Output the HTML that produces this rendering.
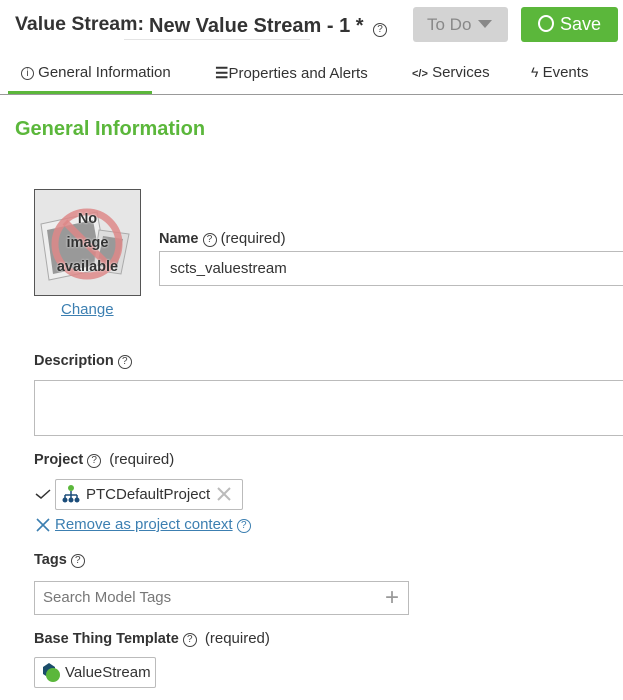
<!DOCTYPE html>
<html><head><meta charset="utf-8"><style>
*{margin:0;padding:0;box-sizing:border-box}
body{width:623px;height:700px;overflow:hidden;background:#fff;font-family:"Liberation Sans",Arial,sans-serif;color:#333;position:relative}
.a{position:absolute;white-space:nowrap}
.q{display:inline-block;width:14px;height:14px;border:1.3px solid #444;border-radius:50%;font-size:10px;line-height:12px;text-align:center;font-weight:normal;vertical-align:1px;color:#444}
.lbl{font-size:14.5px;font-weight:bold;color:#333}
.lbl span.r{font-weight:normal;font-size:15px}
.box{position:absolute;border:1px solid #bbb;background:#fff}
</style></head><body>
<div class="a" style="left:15px;top:13px;font-size:19.5px;font-weight:bold;color:#333">Value Stream:</div>
<div class="a" style="left:149px;top:15px;font-size:20px;font-weight:bold;color:#333">New Value Stream - 1 *</div>
<div class="a" style="left:124px;top:39px;width:186px;height:1px;background:#e4e4e4"></div>
<div class="a" style="left:373px;top:20px"><span class="q">?</span></div>
<div class="a" style="left:413px;top:7px;width:95px;height:35px;background:#d3d3d3;border-radius:3px;color:#888;font-size:17px;line-height:35px;padding-left:14px">To Do <span style="display:inline-block;width:0;height:0;border-left:7px solid transparent;border-right:7px solid transparent;border-top:8px solid #888;vertical-align:2px;margin-left:2px"></span></div>
<div class="a" style="left:521px;top:7px;width:97px;height:35px;background:#5bb73b;border-radius:3px;color:#fff;font-size:18px;line-height:35px;padding-left:17px"><span style="display:inline-block;width:16px;height:17px;border:2.5px solid #fff;border-radius:50%;vertical-align:-2px;margin-right:6px"></span>Save</div>
<div class="a" style="left:21px;top:64px;font-size:15px"><span class="q" style="width:13px;height:13px;line-height:11px">i</span> General Information</div>
<div class="a" style="left:215px;top:64px;font-size:15px"><span style="font-weight:bold">☰</span>Properties and Alerts</div>
<div class="a" style="left:412px;top:64px;font-size:15px"><span style="font-size:11px;font-weight:bold">&lt;/&gt;</span> Services</div>
<div class="a" style="left:531px;top:64px;font-size:15px"><span style="font-size:14px">ϟ</span> Events</div>
<div class="a" style="left:0;top:94px;width:623px;height:1px;background:#999"></div>
<div class="a" style="left:8px;top:91px;width:144px;height:3px;background:#5bb73b"></div>
<div class="a" style="left:15px;top:118px;font-size:20px;font-weight:bold;color:#5bb73b">General Information</div>
<div class="a" style="left:34px;top:189px;width:107px;height:107px;border:1px solid #555;background:#e6e6e6;overflow:hidden">
<svg width="105" height="105" style="position:absolute;left:0;top:0">
<polygon points="6,34 62,22 72,78 14,90" fill="#eee" stroke="#aaa"/><polygon points="12,40 58,30 66,74 18,84" fill="#999"/>
<polygon points="64,40 94,44 86,84 58,80" fill="#ddd" stroke="#aaa"/><polygon points="68,46 88,49 82,78 62,76" fill="#999"/>
<circle cx="52" cy="54" r="32" fill="none" stroke="#d88" stroke-width="7" opacity=".85"/><line x1="30" y1="32" x2="74" y2="76" stroke="#d88" stroke-width="7" opacity=".85"/>
</svg>
<div style="position:absolute;left:0;right:0;top:17px;text-align:center;font-size:14.5px;font-weight:bold;color:#333;line-height:24px;text-shadow:0 0 2px #fff">No<br>image<br>available</div>
</div>
<div class="a" style="left:61px;top:301px;font-size:15px;color:#3c7fb1;text-decoration:underline">Change</div>
<div class="a lbl" style="left:159px;top:230px">Name <span class="q">?</span> <span class="r">(required)</span></div>
<div class="box" style="left:159px;top:251px;width:470px;height:35px;font-size:15px;line-height:33px;padding-left:10px">scts_valuestream</div>
<div class="a lbl" style="left:34px;top:353px">Description <span class="q">?</span></div>
<div class="box" style="left:34px;top:380px;width:595px;height:56px"></div>
<div class="a lbl" style="left:34px;top:451px">Project <span class="q">?</span> &nbsp;<span class="r">(required)</span></div>
<svg class="a" style="left:35px;top:488px" width="16" height="12"><path d="M1 6 L6 10 L15 2" fill="none" stroke="#333" stroke-width="1.5"/></svg>
<div class="box" style="left:55px;top:479px;width:188px;height:31px;border-radius:2px;font-size:15px;line-height:29px;padding-left:30px">PTCDefaultProject</div>
<svg class="a" style="left:61px;top:484px" width="20" height="20"><circle cx="10" cy="4" r="3" fill="#5bb73b"/><path d="M10 7v4M4 11h12M4 11v3M10 11v3M16 11v3" stroke="#1b4d7a" stroke-width="1.5" fill="none"/><circle cx="4" cy="16" r="2.5" fill="#1b4d7a"/><circle cx="10" cy="16" r="2.5" fill="#1b4d7a"/><circle cx="16" cy="16" r="2.5" fill="#1b4d7a"/></svg>
<svg class="a" style="left:216px;top:486px" width="16" height="16"><path d="M2 2L14 14M14 2L2 14" stroke="#bbb" stroke-width="2"/></svg>
<svg class="a" style="left:36px;top:518px" width="14" height="14"><path d="M1 1L13 13M13 1L1 13" stroke="#3c7fb1" stroke-width="1.6"/></svg>
<div class="a" style="left:55px;top:516px;font-size:15px;color:#3c7fb1"><span style="text-decoration:underline">Remove as project context</span> <span class="q" style="border-color:#3c7fb1;color:#3c7fb1">?</span></div>
<div class="a lbl" style="left:34px;top:552px">Tags <span class="q">?</span></div>
<div class="box" style="left:34px;top:581px;width:375px;height:34px;font-size:15px;line-height:32px;padding-left:8px;color:#777">Search Model Tags<span style="position:absolute;right:9px;top:0;font-size:24px;color:#999;font-weight:300">+</span></div>
<div class="a lbl" style="left:34px;top:630px">Base Thing Template <span class="q">?</span> &nbsp;<span class="r">(required)</span></div>
<div class="box" style="left:34px;top:657px;width:122px;height:31px;border-radius:2px;font-size:15px;line-height:29px;padding-left:30px">ValueStream</div>
<svg class="a" style="left:40px;top:662px" width="22" height="22"><polygon points="3,5 9,1 15,5 15,12 9,16 3,12" fill="#1b4d6a"/><circle cx="13" cy="13" r="7" fill="#5bb73b"/></svg>
</body></html>
